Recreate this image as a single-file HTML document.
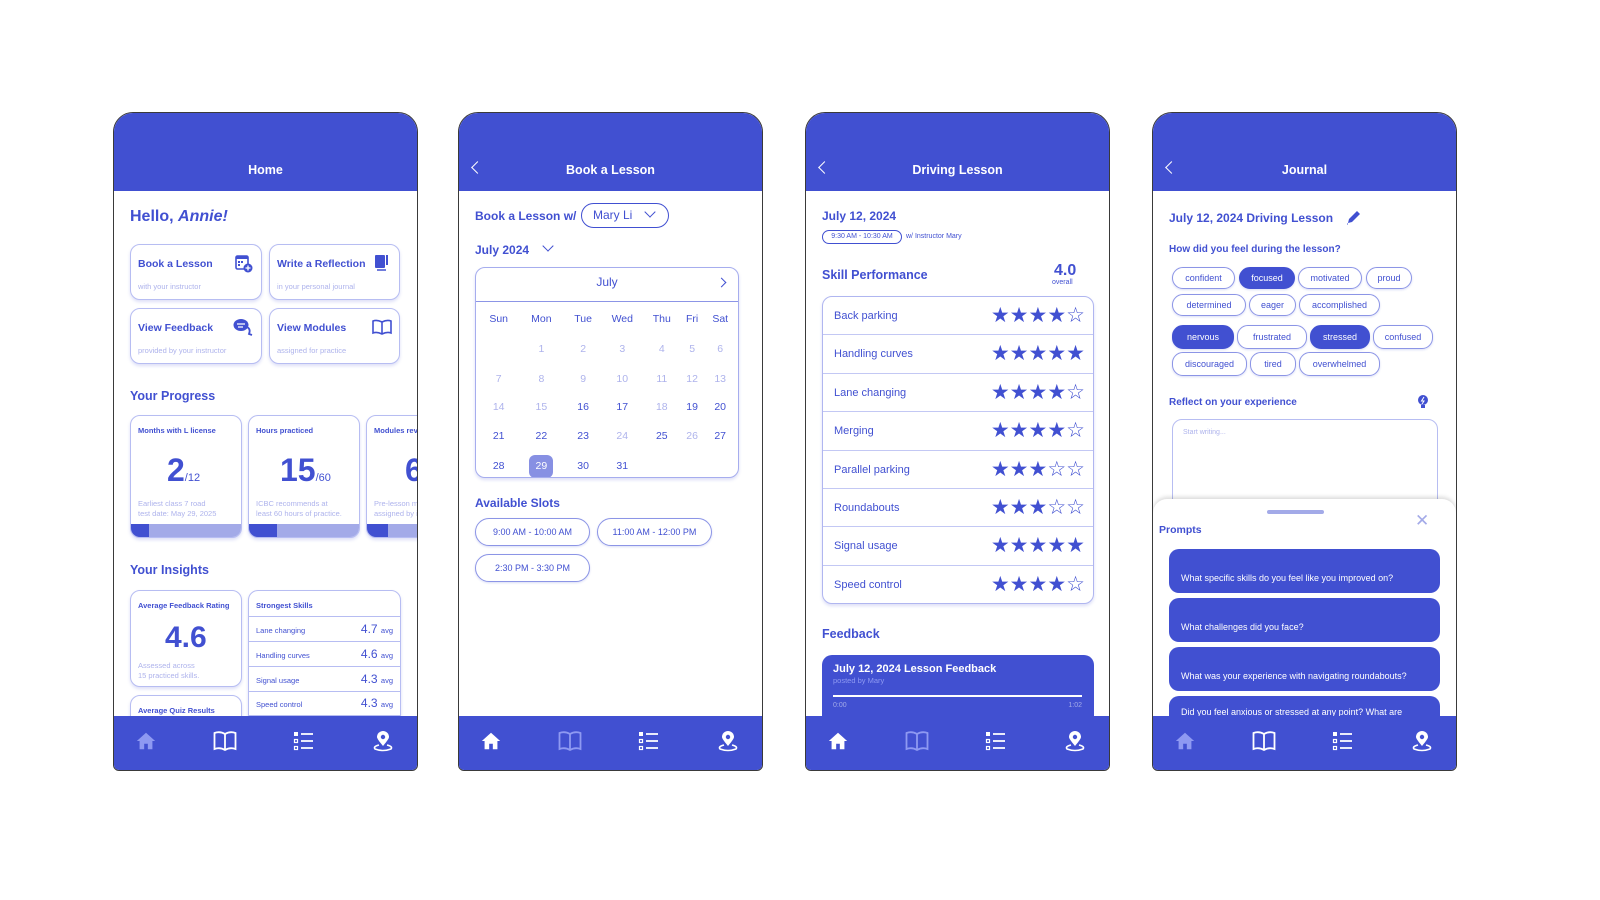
<!DOCTYPE html>
<html><head><meta charset="utf-8">
<style>
*{margin:0;padding:0;box-sizing:border-box}
body{width:1600px;height:900px;background:#fff;position:relative;overflow:hidden;font-family:"Liberation Sans","DejaVu Sans",sans-serif;color:#4150d1}
.p{position:absolute;top:112px;width:305px;height:659px;border:1.5px solid #3a3a3a;border-radius:20px 20px 6px 6px;overflow:hidden;background:#fff}
.hd{position:absolute;left:0;top:0;width:100%;height:78px;background:#4150d1;color:#fff}
.hd .t{position:absolute;left:0;right:0;top:50px;text-align:center;font-weight:bold;font-size:12.5px}
.hd .bk{position:absolute;left:14px;top:50px;width:9px;height:9px;border-left:1.6px solid #fff;border-bottom:1.6px solid #fff;transform:rotate(45deg)}
.nav{position:absolute;left:0;bottom:0;width:100%;height:54px;background:#4150d1}
.nav svg{position:absolute;top:14px}
.a{position:absolute;white-space:nowrap}
.b{font-weight:bold}
.card{position:absolute;border:1.3px solid #b7bdf2;border-radius:10px;box-shadow:0 2px 3px rgba(65,80,209,.18);background:#fff;overflow:hidden}
.lt{color:#aeb3ec}
.chip{position:absolute;height:22px;border:1.2px solid #8c95e6;border-radius:11px;font-size:9px;text-align:center;line-height:20px;color:#4150d1;background:#fff;box-shadow:0 1px 2px rgba(65,80,209,.2)}
.chip.f{background:#4150d1;color:#fff;border-color:#4150d1}
.cal td{text-align:center;font-size:10.5px;height:28px}
.st{font-family:"DejaVu Sans",sans-serif;font-size:21px;letter-spacing:0px;position:absolute;right:8px;color:#4150d1}
.row{position:absolute;left:0;width:100%;height:38.4px;border-bottom:1.2px solid #c3c8f4;font-size:11px}
.row span{position:absolute;left:11px;top:13px}
.pr{position:absolute;left:16px;width:271px;height:44px;background:#4150d1;border-radius:10px;color:#fff;font-size:9px}
.pr span{position:absolute;left:12px;top:24px}
</style></head><body>

<!-- PHONE 1 -->
<div class="p" style="left:113px">
 <div class="hd"><div class="t">Home</div></div>
 <div class="a b" style="left:16px;top:95px;font-size:16px">Hello, <i>Annie!</i></div>
 <div class="card" style="left:16px;top:131px;width:132px;height:56px"><div class="a b" style="left:7px;top:13px;font-size:10.5px">Book a Lesson</div><div class="a lt" style="left:7px;top:37px;font-size:7.5px">with your instructor</div>
  <svg class="a" style="left:104px;top:10px" width="18" height="18" viewBox="0 0 18 18"><rect x="1" y="1" width="12" height="13" rx="1.5" fill="none" stroke="#4150d1" stroke-width="1.6"/><rect x="1" y="1" width="12" height="3" fill="#4150d1"/><rect x="3" y="6" width="2" height="2" fill="#4150d1"/><rect x="6" y="6" width="2" height="2" fill="#4150d1"/><rect x="3" y="9" width="2" height="2" fill="#4150d1"/><circle cx="13" cy="13" r="4.5" fill="#4150d1"/><path d="M13 10.5v5M10.5 13h5" stroke="#fff" stroke-width="1.3"/></svg></div>
 <div class="card" style="left:155px;top:131px;width:131px;height:56px"><div class="a b" style="left:7px;top:13px;font-size:10.5px">Write a Reflection</div><div class="a lt" style="left:7px;top:37px;font-size:7.5px">in your personal journal</div>
  <svg class="a" style="left:104px;top:9px" width="14" height="18" viewBox="0 0 14 18"><rect x="1" y="1" width="10" height="13" rx="1" fill="#4150d1"/><rect x="12" y="1" width="2" height="10" fill="#4150d1"/><path d="M3 16h9" stroke="#4150d1" stroke-width="1.5"/></svg></div>
 <div class="card" style="left:16px;top:195px;width:132px;height:56px"><div class="a b" style="left:7px;top:13px;font-size:10.5px">View Feedback</div><div class="a lt" style="left:7px;top:37px;font-size:7.5px">provided by your instructor</div>
  <svg class="a" style="left:102px;top:9px" width="20" height="18" viewBox="0 0 20 18"><ellipse cx="8" cy="7" rx="7.5" ry="6" fill="#4150d1"/><path d="M4 6h8M5 9h5" stroke="#fff" stroke-width="1.3"/><path d="M14 9 Q18 11 16 16 L19 17" fill="none" stroke="#4150d1" stroke-width="1.8"/></svg></div>
 <div class="card" style="left:155px;top:195px;width:131px;height:56px"><div class="a b" style="left:7px;top:13px;font-size:10.5px">View Modules</div><div class="a lt" style="left:7px;top:37px;font-size:7.5px">assigned for practice</div>
  <svg class="a" style="left:102px;top:10px" width="20" height="16" viewBox="0 0 20 16"><path d="M1 2 Q5 0.5 10 3 Q15 0.5 19 2 V14 Q15 12.5 10 15 Q5 12.5 1 14Z M10 3V15" fill="none" stroke="#4150d1" stroke-width="1.6"/></svg></div>
 <div class="a b" style="left:16px;top:276px;font-size:12.5px">Your Progress</div>
 <div class="card" style="left:16px;top:302px;width:112px;height:123px"><div class="a b" style="left:7px;top:10px;font-size:7.5px">Months with L license</div><div class="a b" style="left:36px;top:36px;font-size:32px">2<span style="font-size:11px;font-weight:normal">/12</span></div><div class="a lt" style="left:7px;top:83px;font-size:7.5px;line-height:9.5px">Earliest class 7 road<br>test date: May 29, 2025</div><div class="a" style="left:0;bottom:0;width:100%;height:13px;background:#a3aae8"><div style="width:18px;height:13px;background:#4150d1"></div></div></div>
 <div class="card" style="left:134px;top:302px;width:112px;height:123px"><div class="a b" style="left:7px;top:10px;font-size:7.5px">Hours practiced</div><div class="a b" style="left:31px;top:36px;font-size:32px">15<span style="font-size:11px;font-weight:normal">/60</span></div><div class="a lt" style="left:7px;top:83px;font-size:7.5px;line-height:9.5px">ICBC recommends at<br>least 60 hours of practice.</div><div class="a" style="left:0;bottom:0;width:100%;height:13px;background:#a3aae8"><div style="width:28px;height:13px;background:#4150d1"></div></div></div>
 <div class="card" style="left:252px;top:302px;width:112px;height:123px"><div class="a b" style="left:7px;top:10px;font-size:7.5px">Modules reviewed</div><div class="a b" style="left:38px;top:36px;font-size:32px">6</div><div class="a lt" style="left:7px;top:83px;font-size:7.5px;line-height:9.5px">Pre-lesson modules<br>assigned by instructor</div><div class="a" style="left:0;bottom:0;width:100%;height:13px;background:#a3aae8"><div style="width:21px;height:13px;background:#4150d1"></div></div></div>
 <div class="a b" style="left:16px;top:450px;font-size:12.5px">Your Insights</div>
 <div class="card" style="left:16px;top:477px;width:112px;height:97px"><div class="a b" style="left:7px;top:10px;font-size:7.5px">Average Feedback Rating</div><div class="a b" style="left:34px;top:30px;font-size:30px">4.6</div><div class="a lt" style="left:7px;top:70px;font-size:7.5px;line-height:9.5px">Assessed across<br>15 practiced skills.</div></div>
 <div class="card" style="left:16px;top:582px;width:112px;height:60px"><div class="a b" style="left:7px;top:10px;font-size:7.5px">Average Quiz Results</div></div>
 <div class="card" style="left:134px;top:477px;width:153px;height:140px;border-radius:10px 10px 0 0">
  <div class="a b" style="left:7px;top:10px;font-size:7.5px">Strongest Skills</div>
  <div class="a" style="left:0;top:25px;width:100%;border-top:1.2px solid #b7bdf2"></div>
  <div class="a" style="left:7px;top:35px;font-size:7.5px">Lane changing</div><div class="a" style="right:7px;top:31px;font-size:12px">4.7 <span style="font-size:7.5px">avg</span></div>
  <div class="a" style="left:0;top:50px;width:100%;border-top:1.2px solid #b7bdf2"></div>
  <div class="a" style="left:7px;top:60px;font-size:7.5px">Handling curves</div><div class="a" style="right:7px;top:56px;font-size:12px">4.6 <span style="font-size:7.5px">avg</span></div>
  <div class="a" style="left:0;top:75px;width:100%;border-top:1.2px solid #b7bdf2"></div>
  <div class="a" style="left:7px;top:85px;font-size:7.5px">Signal usage</div><div class="a" style="right:7px;top:81px;font-size:12px">4.3 <span style="font-size:7.5px">avg</span></div>
  <div class="a" style="left:0;top:100px;width:100%;border-top:1.2px solid #b7bdf2"></div>
  <div class="a" style="left:7px;top:109px;font-size:7.5px">Speed control</div><div class="a" style="right:7px;top:105px;font-size:12px">4.3 <span style="font-size:7.5px">avg</span></div>
  <div class="a" style="left:0;top:124px;width:100%;border-top:1.2px solid #b7bdf2"></div>
 </div>
 <div class="nav">
  <svg style="left:21px" width="22" height="22" viewBox="0 0 24 24"><path d="M2 12 L12 3 L22 12 H19 V21 H14 V15 H10 V21 H5 V12Z" fill="#8e99f2"/></svg>
  <svg style="left:99px" width="24" height="22" viewBox="0 0 24 22"><path d="M1.5 3 Q7 1 12 4 Q17 1 22.5 3 V19 Q17 17 12 20 Q7 17 1.5 19Z M12 4V20" fill="none" stroke="#fff" stroke-width="1.8"/></svg>
  <svg style="left:179px" width="22" height="22" viewBox="0 0 22 22"><rect x="1" y="2" width="4" height="4" fill="#fff"/><rect x="1.5" y="9.5" width="3" height="3" fill="none" stroke="#fff" stroke-width="1.2"/><rect x="1.5" y="16.5" width="3" height="3" fill="none" stroke="#fff" stroke-width="1.2"/><path d="M8 4h12M8 11h12M8 18h12" stroke="#fff" stroke-width="1.8"/></svg>
  <svg style="left:258px" width="22" height="22" viewBox="0 0 22 22"><path d="M11 16 C6 10 5 8 5 7 A6 6 0 0 1 17 7 C17 8 16 10 11 16Z" fill="#fff"/><circle cx="11" cy="7" r="2.2" fill="#4150d1"/><path d="M7 15 Q1 16.5 3 19 Q11 22 19 19 Q21 16.5 15 15" fill="none" stroke="#fff" stroke-width="1.6"/></svg>
 </div>
</div>

<!-- PHONE 2 -->
<div class="p" style="left:458px">
 <div class="hd"><div class="bk"></div><div class="t">Book a Lesson</div></div>
 <div class="a b" style="left:16px;top:96px;font-size:12px">Book a Lesson w/</div>
 <div class="a" style="left:122px;top:90px;width:88px;height:25px;border:1.3px solid #4150d1;border-radius:13px;font-size:12px;line-height:23px;padding-left:11px">Mary Li<span class="a" style="left:64px;top:4px;width:8px;height:8px;border-right:1.6px solid #4150d1;border-bottom:1.6px solid #4150d1;transform:rotate(45deg)"></span></div>
 <div class="a b" style="left:16px;top:130px;font-size:12px">July 2024</div>
 <div class="a" style="left:85px;top:129px;width:8px;height:8px;border-right:1.6px solid #4150d1;border-bottom:1.6px solid #4150d1;transform:rotate(45deg)"></div>
 <div class="card" style="left:16px;top:154px;width:264px;height:211px;border-color:#a6adee">
  <div class="a" style="left:0;right:0;top:7px;text-align:center;font-size:12px">July</div>
  <div class="a" style="right:13px;top:11px;width:7px;height:7px;border-right:1.6px solid #4150d1;border-top:1.6px solid #4150d1;transform:rotate(45deg)"></div>
  <div class="a" style="left:0;top:33px;width:100%;border-top:1.3px solid #8c95e6"></div>
  <table class="cal a" style="left:4px;top:37px;width:256px;border-collapse:collapse">
   <tr style="height:26px"><td>Sun</td><td>Mon</td><td>Tue</td><td>Wed</td><td>Thu</td><td>Fri</td><td>Sat</td></tr>
   <tr style="color:#aeb3ec"><td style="height:32px"></td><td>1</td><td>2</td><td>3</td><td>4</td><td>5</td><td>6</td></tr>
   <tr style="color:#aeb3ec"><td>7</td><td>8</td><td>9</td><td>10</td><td>11</td><td>12</td><td>13</td></tr>
   <tr><td class="lt">14</td><td class="lt">15</td><td>16</td><td>17</td><td class="lt">18</td><td>19</td><td>20</td></tr>
   <tr style="height:30px"><td>21</td><td>22</td><td>23</td><td class="lt">24</td><td>25</td><td class="lt">26</td><td>27</td></tr>
   <tr style="height:30px"><td>28</td><td><span style="display:inline-block;width:24px;height:23px;line-height:23px;border-radius:6px;background:#8790e3;color:#fff">29</span></td><td>30</td><td>31</td><td></td><td></td><td></td></tr>
  </table>
 </div>
 <div class="a b" style="left:16px;top:383px;font-size:12px">Available Slots</div>
 <div class="chip" style="left:16px;top:405px;width:115px;height:28px;line-height:26px;border-radius:14px">9:00 AM - 10:00 AM</div>
 <div class="chip" style="left:138px;top:405px;width:115px;height:28px;line-height:26px;border-radius:14px">11:00 AM - 12:00 PM</div>
 <div class="chip" style="left:16px;top:441px;width:115px;height:28px;line-height:26px;border-radius:14px">2:30 PM - 3:30 PM</div>
 <div class="nav">
  <svg style="left:21px" width="22" height="22" viewBox="0 0 24 24"><path d="M2 12 L12 3 L22 12 H19 V21 H14 V15 H10 V21 H5 V12Z" fill="#fff"/></svg>
  <svg style="left:99px" width="24" height="22" viewBox="0 0 24 22"><path d="M1.5 3 Q7 1 12 4 Q17 1 22.5 3 V19 Q17 17 12 20 Q7 17 1.5 19Z M12 4V20" fill="none" stroke="#8e99f2" stroke-width="1.8"/></svg>
  <svg style="left:179px" width="22" height="22" viewBox="0 0 22 22"><rect x="1" y="2" width="4" height="4" fill="#fff"/><rect x="1.5" y="9.5" width="3" height="3" fill="none" stroke="#fff" stroke-width="1.2"/><rect x="1.5" y="16.5" width="3" height="3" fill="none" stroke="#fff" stroke-width="1.2"/><path d="M8 4h12M8 11h12M8 18h12" stroke="#fff" stroke-width="1.8"/></svg>
  <svg style="left:258px" width="22" height="22" viewBox="0 0 22 22"><path d="M11 16 C6 10 5 8 5 7 A6 6 0 0 1 17 7 C17 8 16 10 11 16Z" fill="#fff"/><circle cx="11" cy="7" r="2.2" fill="#4150d1"/><path d="M7 15 Q1 16.5 3 19 Q11 22 19 19 Q21 16.5 15 15" fill="none" stroke="#fff" stroke-width="1.6"/></svg>
 </div>
</div>

<!-- PHONE 3 -->
<div class="p" style="left:805px">
 <div class="hd"><div class="bk"></div><div class="t">Driving Lesson</div></div>
 <div class="a b" style="left:16px;top:96px;font-size:12px">July 12, 2024</div>
 <div class="a" style="left:16px;top:117px;width:80px;height:14px;border:1.1px solid #4150d1;border-radius:7px;font-size:7px;line-height:12px;text-align:center">9:30 AM - 10:30 AM</div>
 <div class="a" style="left:100px;top:120px;font-size:7px">w/ Instructor Mary</div>
 <div class="a b" style="left:16px;top:155px;font-size:12.5px">Skill Performance</div>
 <div class="a b" style="left:248px;top:149px;font-size:16px">4.0</div>
 <div class="a" style="left:246px;top:166px;font-size:7px">overall</div>
 <div class="card" style="left:16px;top:183px;width:272px;height:308px;border-color:#b0b6f0">
  <div class="row" style="top:0"><span>Back parking</span><div class="st" style="top:6px">★★★★☆</div></div>
  <div class="row" style="top:38.4px"><span>Handling curves</span><div class="st" style="top:6px">★★★★★</div></div>
  <div class="row" style="top:76.8px"><span>Lane changing</span><div class="st" style="top:6px">★★★★☆</div></div>
  <div class="row" style="top:115.2px"><span>Merging</span><div class="st" style="top:6px">★★★★☆</div></div>
  <div class="row" style="top:153.6px"><span>Parallel parking</span><div class="st" style="top:6px">★★★☆☆</div></div>
  <div class="row" style="top:192px"><span>Roundabouts</span><div class="st" style="top:6px">★★★☆☆</div></div>
  <div class="row" style="top:230.4px"><span>Signal usage</span><div class="st" style="top:6px">★★★★★</div></div>
  <div class="row" style="top:268.8px;border:none"><span>Speed control</span><div class="st" style="top:6px">★★★★☆</div></div>
 </div>
 <div class="a b" style="left:16px;top:514px;font-size:12.5px">Feedback</div>
 <div class="a" style="left:16px;top:542px;width:272px;height:80px;background:#4150d1;border-radius:10px;color:#fff">
  <div class="a b" style="left:11px;top:8px;font-size:11px">July 12, 2024 Lesson Feedback</div>
  <div class="a" style="left:11px;top:21px;font-size:7.5px;color:#8e99f2">posted by Mary</div>
  <div class="a" style="left:11px;top:40px;width:249px;height:2px;background:#fff"></div>
  <div class="a" style="left:11px;top:47px;font-size:7px;color:#a3aae8">0:00</div>
  <div class="a" style="right:12px;top:47px;font-size:7px;color:#a3aae8">1:02</div>
 </div>
 <div class="nav">
  <svg style="left:21px" width="22" height="22" viewBox="0 0 24 24"><path d="M2 12 L12 3 L22 12 H19 V21 H14 V15 H10 V21 H5 V12Z" fill="#fff"/></svg>
  <svg style="left:99px" width="24" height="22" viewBox="0 0 24 22"><path d="M1.5 3 Q7 1 12 4 Q17 1 22.5 3 V19 Q17 17 12 20 Q7 17 1.5 19Z M12 4V20" fill="none" stroke="#8e99f2" stroke-width="1.8"/></svg>
  <svg style="left:179px" width="22" height="22" viewBox="0 0 22 22"><rect x="1" y="2" width="4" height="4" fill="#fff"/><rect x="1.5" y="9.5" width="3" height="3" fill="none" stroke="#fff" stroke-width="1.2"/><rect x="1.5" y="16.5" width="3" height="3" fill="none" stroke="#fff" stroke-width="1.2"/><path d="M8 4h12M8 11h12M8 18h12" stroke="#fff" stroke-width="1.8"/></svg>
  <svg style="left:258px" width="22" height="22" viewBox="0 0 22 22"><path d="M11 16 C6 10 5 8 5 7 A6 6 0 0 1 17 7 C17 8 16 10 11 16Z" fill="#fff"/><circle cx="11" cy="7" r="2.2" fill="#4150d1"/><path d="M7 15 Q1 16.5 3 19 Q11 22 19 19 Q21 16.5 15 15" fill="none" stroke="#fff" stroke-width="1.6"/></svg>
 </div>
</div>

<!-- PHONE 4 -->
<div class="p" style="left:1152px">
 <div class="hd"><div class="bk"></div><div class="t">Journal</div></div>
 <div class="a b" style="left:16px;top:98px;font-size:12px">July 12, 2024 Driving Lesson</div>
 <svg class="a" style="left:193px;top:96px" width="16" height="16" viewBox="0 0 16 16"><path d="M2 14 L3 10 L11 2 L14 5 L6 13Z" fill="#4150d1"/><path d="M1 15h1" stroke="#4150d1"/></svg>
 <div class="a b" style="left:16px;top:131px;font-size:10px">How did you feel during the lesson?</div>
 <div class="chip" style="left:19px;top:154px;width:63px">confident</div>
 <div class="chip f" style="left:86px;top:154px;width:56px">focused</div>
 <div class="chip" style="left:145px;top:154px;width:64px">motivated</div>
 <div class="chip" style="left:213px;top:154px;width:46px">proud</div>
 <div class="chip" style="left:19px;top:181px;width:74px">determined</div>
 <div class="chip" style="left:96px;top:181px;width:47px">eager</div>
 <div class="chip" style="left:146px;top:181px;width:81px">accomplished</div>
 <div class="chip f" style="left:19px;top:212px;width:62px;height:24px;line-height:22px">nervous</div>
 <div class="chip" style="left:84px;top:212px;width:70px;height:24px;line-height:22px">frustrated</div>
 <div class="chip f" style="left:157px;top:212px;width:60px;height:24px;line-height:22px">stressed</div>
 <div class="chip" style="left:220px;top:212px;width:60px;height:24px;line-height:22px">confused</div>
 <div class="chip" style="left:19px;top:239px;width:75px;height:24px;line-height:22px">discouraged</div>
 <div class="chip" style="left:97px;top:239px;width:46px;height:24px;line-height:22px">tired</div>
 <div class="chip" style="left:146px;top:239px;width:81px;height:24px;line-height:22px">overwhelmed</div>
 <div class="a b" style="left:16px;top:284px;font-size:10px">Reflect on your experience</div>
 <svg class="a" style="left:262px;top:280px" width="16" height="18" viewBox="0 0 16 18"><circle cx="8" cy="7" r="5" fill="#4150d1"/><rect x="6" y="12" width="4" height="3" fill="#4150d1"/><path d="M9 4 L6.5 8 H9 L7 11" stroke="#fff" stroke-width="1" fill="none"/></svg>
 <div class="a" style="left:19px;top:306px;width:266px;height:120px;border:1.2px solid #b7bdf2;border-radius:10px"><div class="a lt" style="left:10px;top:9px;font-size:7px">Start writing...</div></div>
 <div class="a" style="left:0;top:386px;width:100%;height:240px;background:#fff;border-radius:14px 14px 0 0;box-shadow:0 -2px 4px rgba(0,0,0,.15)">
  <div class="a" style="left:114px;top:11px;width:57px;height:4px;border-radius:2px;background:#a3aae8"></div>
  <div class="a b" style="left:6px;top:25px;font-size:10.5px">Prompts</div>
  <div class="a" style="left:262px;top:12px;font-size:17px;color:#a3aae8;font-family:'DejaVu Sans',sans-serif">✕</div>
  <div class="pr" style="top:50px"><span>What specific skills do you feel like you improved on?</span></div>
  <div class="pr" style="top:99px"><span>What challenges did you face?</span></div>
  <div class="pr" style="top:148px"><span>What was your experience with navigating roundabouts?</span></div>
  <div class="pr" style="top:197px"><span style="top:11px">Did you feel anxious or stressed at any point? What are</span></div>
 </div>
 <div class="nav">
  <svg style="left:21px" width="22" height="22" viewBox="0 0 24 24"><path d="M2 12 L12 3 L22 12 H19 V21 H14 V15 H10 V21 H5 V12Z" fill="#8e99f2"/></svg>
  <svg style="left:99px" width="24" height="22" viewBox="0 0 24 22"><path d="M1.5 3 Q7 1 12 4 Q17 1 22.5 3 V19 Q17 17 12 20 Q7 17 1.5 19Z M12 4V20" fill="none" stroke="#fff" stroke-width="1.8"/></svg>
  <svg style="left:179px" width="22" height="22" viewBox="0 0 22 22"><rect x="1" y="2" width="4" height="4" fill="#fff"/><rect x="1.5" y="9.5" width="3" height="3" fill="none" stroke="#fff" stroke-width="1.2"/><rect x="1.5" y="16.5" width="3" height="3" fill="none" stroke="#fff" stroke-width="1.2"/><path d="M8 4h12M8 11h12M8 18h12" stroke="#fff" stroke-width="1.8"/></svg>
  <svg style="left:258px" width="22" height="22" viewBox="0 0 22 22"><path d="M11 16 C6 10 5 8 5 7 A6 6 0 0 1 17 7 C17 8 16 10 11 16Z" fill="#fff"/><circle cx="11" cy="7" r="2.2" fill="#4150d1"/><path d="M7 15 Q1 16.5 3 19 Q11 22 19 19 Q21 16.5 15 15" fill="none" stroke="#fff" stroke-width="1.6"/></svg>
 </div>
</div>
</body></html>
